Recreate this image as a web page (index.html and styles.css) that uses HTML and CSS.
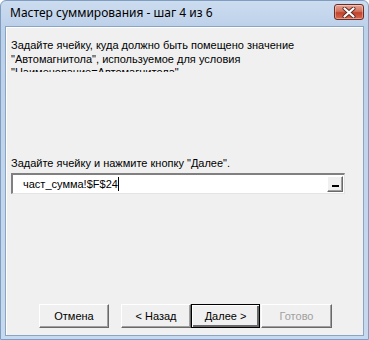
FILE: index.html
```html
<!DOCTYPE html>
<html lang="ru">
<head>
    <meta charset="UTF-8" />
    <title>Мастер суммирования - шаг 4 из 6</title>
    <link rel="stylesheet" href="styles.css">
</head>
<body>

    <div class="window">
        <!-- Заголовок окна -->
        <div class="titlebar">
            <span class="title">Мастер суммирования - шаг 4 из 6</span>
            <button class="close-btn" aria-label="Закрыть">
                <svg width="14" height="11" viewBox="0 0 14 11">
                    <path d="M2.5 1.5 L11.5 9.5 M11.5 1.5 L2.5 9.5" stroke="#5a2a24" stroke-width="4" stroke-linecap="round"/>
                    <path d="M2.5 1.5 L11.5 9.5 M11.5 1.5 L2.5 9.5" stroke="#ffffff" stroke-width="2.2" stroke-linecap="round"/>
                </svg>
            </button>
        </div>

        <!-- Содержимое -->
        <div class="client">
            <div class="prompt">
                <p>Задайте ячейку, куда должно быть помещено значение</p>
                <p>"Автомагнитола", используемое для условия</p>
                <p>"Наименование=Автомагнитола"</p>
            </div>

            <div class="field-label">Задайте ячейку и нажмите кнопку "Далее".</div>

            <div class="field">
                <span class="value">част_сумма!$F$24</span><span class="caret"></span>
                <button class="collapse-btn" aria-label="Свернуть"><span class="dash"></span></button>
            </div>

            <div class="actions">
                <button class="btn">Отмена</button>
                <div class="nav">
                    <button class="btn">&lt; Назад</button>
                    <button class="btn default">Далее &gt;</button>
                </div>
                <button class="btn finish" disabled>Готово</button>
            </div>
        </div>
    </div>

</body>
</html>
```

FILE: styles.css
```css
body {
  margin: 0;
  padding: 0;
  background: #ffffff;
  font-family: 'Liberation Sans', Arial, sans-serif;
  font-size: 11px;
  color: #000;
}

.window {
  width: 369px;
  height: 340px;
  box-sizing: border-box;
  display: flex;
  flex-direction: column;
  padding: 0 4px 3px 4px;
  border: 1px solid #7f9dc0;
  border-radius: 6px 6px 0 0;
  background: linear-gradient(to bottom, #cddcef 0px, #bcd1ea 26px, #c6d9ee 100%);
}

/* Заголовок */
.titlebar {
  height: 25px;
  display: flex;
  align-items: center;
  justify-content: space-between;
  padding-left: 5px;
}
.title {
  font-family: 'Noto Sans', 'Open Sans', sans-serif;
  font-size: 12px;
  color: #000;
  margin-top: -2px;
}
.close-btn {
  width: 30px;
  height: 16px;
  margin-top: -3px;
  padding: 0;
  border: 1px solid #6d2b25;
  border-radius: 3px;
  background: linear-gradient(to bottom, #e6a596 0%, #d3735e 45%, #c2432d 55%, #d56a4f 100%);
  box-shadow: inset 0 0 0 1px rgba(255, 255, 255, 0.35);
  display: flex;
  align-items: center;
  justify-content: center;
}

/* Клиентская область */
.client {
  flex: 1;
  background: #f0f0f0;
  border: 1px solid #8aa4c2;
  box-shadow: inset 1px 1px 0 #ffffff;
  padding: 12px 0 0 5px;
  display: flex;
  flex-direction: column;
}

.prompt {
  height: 33px;
  overflow: hidden;
  line-height: 13.5px;
}
.prompt p {
  margin: 0;
}

.field-label {
  margin-top: 85px;
  line-height: 13px;
}

.field {
  margin-top: 3px;
  width: 334px;
  height: 21px;
  box-sizing: border-box;
  background: #fff;
  border-top: 2px solid #808080;
  border-left: 2px solid #808080;
  border-right: 1px solid #e3e3e3;
  border-bottom: 1px solid #e3e3e3;
  display: flex;
  align-items: center;
  padding-left: 10px;
}
.value {
  line-height: 14px;
}
.caret {
  width: 1px;
  height: 14px;
  background: #000;
}
.collapse-btn {
  margin-left: auto;
  margin-right: 1px;
  width: 16px;
  height: 16px;
  padding: 0;
  background: #f0f0f0;
  border-top: 1px solid #ffffff;
  border-left: 1px solid #ffffff;
  border-right: 1px solid #696969;
  border-bottom: 1px solid #696969;
  box-shadow: inset -1px -1px 0 #a0a0a0;
  display: flex;
  align-items: flex-end;
  justify-content: center;
}
.dash {
  width: 7px;
  height: 2px;
  background: #000;
  margin-bottom: 4px;
}

/* Кнопки */
.actions {
  margin-top: auto;
  margin-bottom: 7px;
  display: flex;
  padding-left: 28px;
}
.nav {
  display: flex;
  margin-left: 12px;
}
.btn {
  width: 70px;
  height: 24px;
  padding: 0;
  font-family: 'Liberation Sans', Arial, sans-serif;
  font-size: 11px;
  color: #000;
  background: #f0f0f0;
  border-top: 1px solid #ffffff;
  border-left: 1px solid #ffffff;
  border-right: 1px solid #696969;
  border-bottom: 1px solid #696969;
  box-shadow: inset -1px -1px 0 #a0a0a0;
}
.btn.default {
  width: 69px;
  border: 1px solid #000;
  box-shadow: inset 1px 1px 0 #ffffff, inset -2px -2px 0 #696969;
}
.btn.finish {
  margin-left: 1px;
  width: 71px;
}
.btn:disabled {
  color: #a0a0a0;
}
```
